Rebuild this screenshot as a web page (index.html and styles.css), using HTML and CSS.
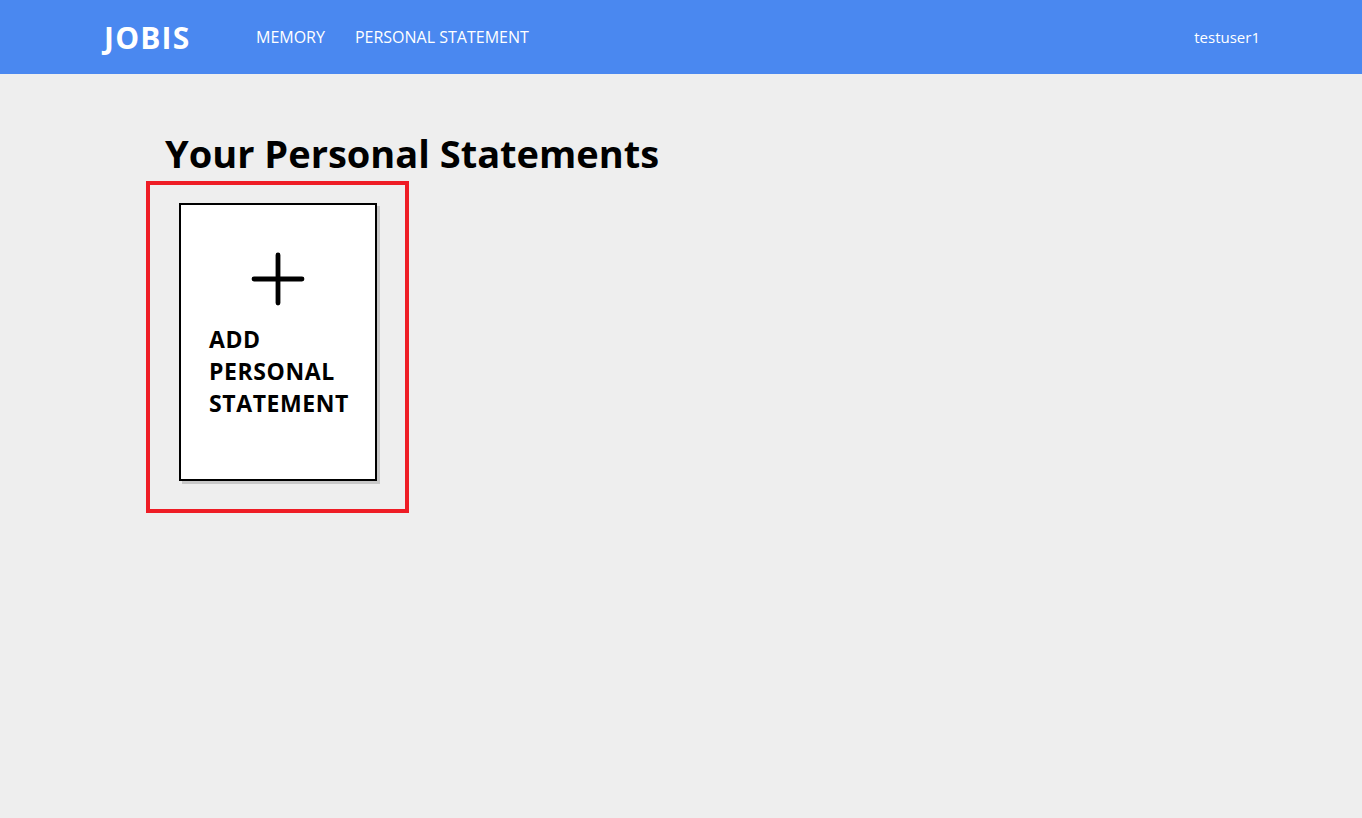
FILE: index.html
```html
<!DOCTYPE html>
<html>
<head>
<meta charset="utf-8">
<link rel="stylesheet" href="styles.css">
</head>
<body>
<header class="topbar">
  <div class="brand">JOBIS</div>
  <nav class="nav">
    <a class="nav-link">MEMORY</a>
    <a class="nav-link">PERSONAL STATEMENT</a>
  </nav>
  <div class="user">testuser1</div>
</header>
<main class="content">
  <h1 class="title">Your Personal Statements</h1>
  <div class="highlight">
    <div class="card">
      <svg class="plus" width="56" height="56" viewBox="0 0 56 56">
        <path d="M28 4 V52 M4 28 H52" stroke="#000" stroke-width="4.8" stroke-linecap="round" fill="none"/>
      </svg>
      <div class="card-label">ADD<br>PERSONAL<br>STATEMENT</div>
    </div>
  </div>
</main>
</body>
</html>
```

FILE: styles.css
```css
* { box-sizing: border-box; }
html, body { margin: 0; padding: 0; }
body {
  background: #eeeeee;
  font-family: "Open Sans", "Noto Sans", sans-serif;
  color: #000;
  height: 818px;
}
.topbar {
  height: 74px;
  background: #4a88f0;
  display: flex;
  align-items: center;
  padding: 0 104px 0 104px;
  color: #fff;
}
.brand {
  font-size: 30px;
  font-weight: 700;
  letter-spacing: 1.2px;
  width: 152px;
}
.nav {
  display: flex;
  gap: 30px;
  flex: 1;
}
.nav-link {
  font-size: 16px;
  color: #fff;
  letter-spacing: 0;
}
.user {
  font-size: 15px;
  margin-right: -2px;
}
.content {
  padding: 0 0 0 146px;
}
.title {
  margin: 0;
  padding: 52px 0 0 19px;
  font-size: 38px;
  font-weight: 700;
  line-height: 54px;
  height: 107px;
}
.highlight {
  width: 263px;
  height: 332px;
  border: 4px solid #ee1c25;
  padding: 18px 0 0 29px;
}
.card {
  width: 198px;
  height: 278px;
  background: #fff;
  border: 2px solid #000;
  box-shadow: 3px 3px 0 #c8c8c8;
  display: flex;
  flex-direction: column;
}
.plus {
  margin: 46px 0 0 69px;
}
.card-label {
  margin: 16px 0 0 28px;
  font-size: 23px;
  font-weight: 700;
  line-height: 32px;
  letter-spacing: 0.6px;
}
```
